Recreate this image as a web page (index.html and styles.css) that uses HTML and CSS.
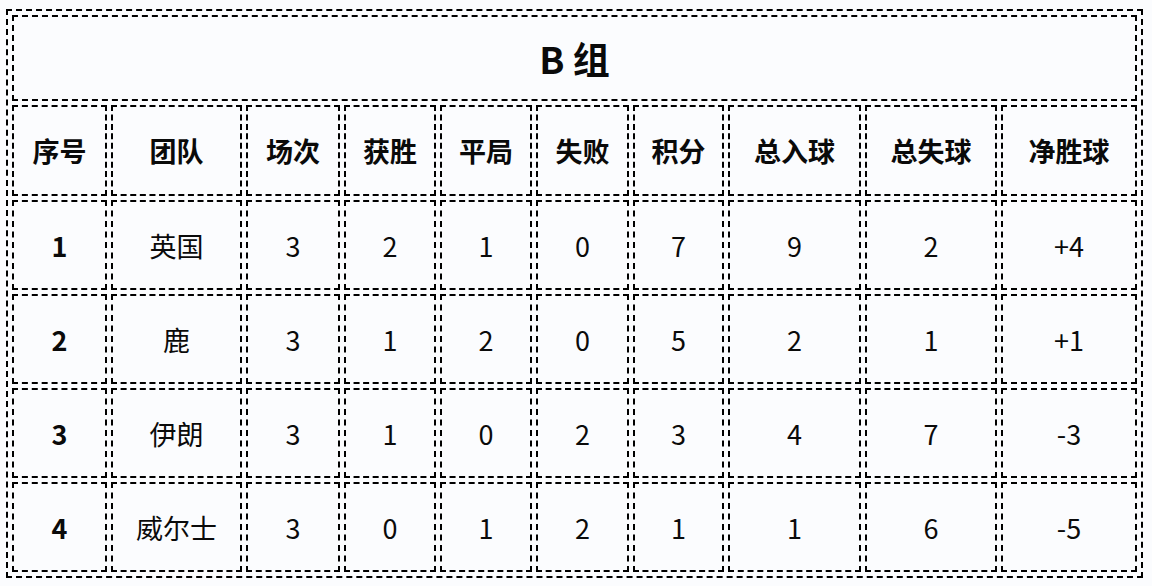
FILE: index.html
```html
<!DOCTYPE html>
<html lang="zh">
<head>
<meta charset="utf-8">
<link rel="stylesheet" href="styles.css">
</head>
<body>
<table class="group">
  <colgroup>
    <col class="c1"><col class="c2"><col class="c3"><col class="c4"><col class="c5">
    <col class="c6"><col class="c7"><col class="c8"><col class="c9"><col class="c10">
  </colgroup>
  <tr class="title-row"><td colspan="10" class="title">B 组</td></tr>
  <tr class="head">
    <th>序号</th><th>团队</th><th>场次</th><th>获胜</th><th>平局</th><th>失败</th><th>积分</th><th>总入球</th><th>总失球</th><th>净胜球</th>
  </tr>
  <tr class="row">
    <td class="rank">1</td><td>英国</td><td>3</td><td>2</td><td>1</td><td>0</td><td>7</td><td>9</td><td>2</td><td>+4</td>
  </tr>
  <tr class="row">
    <td class="rank">2</td><td>鹿</td><td>3</td><td>1</td><td>2</td><td>0</td><td>5</td><td>2</td><td>1</td><td>+1</td>
  </tr>
  <tr class="row">
    <td class="rank">3</td><td>伊朗</td><td>3</td><td>1</td><td>0</td><td>2</td><td>3</td><td>4</td><td>7</td><td>-3</td>
  </tr>
  <tr class="row">
    <td class="rank">4</td><td>威尔士</td><td>3</td><td>0</td><td>1</td><td>2</td><td>1</td><td>1</td><td>6</td><td>-5</td>
  </tr>
</table>
</body>
</html>
```

FILE: styles.css
```css
html, body {
  margin: 0;
  padding: 0;
  background: #fbfcfe;
}
body {
  padding: 9px 0 0 6px;
  font-family: "Noto Sans CJK SC", "Noto Sans", sans-serif;
  color: #0a0a0a;
}
.group {
  border: 2px dashed #000;
  border-collapse: separate;
  border-spacing: 4px;
  table-layout: fixed;
  width: 1137px;
}
.c1 { width: 95px; }
.c2 { width: 131px; }
.c3 { width: 94px; }
.c4 { width: 92px; }
.c5 { width: 92px; }
.c6 { width: 93px; }
.c7 { width: 91px; }
.c8 { width: 133px; }
.c9 { width: 132px; }
.c10 { width: 136px; }
.group td, .group th {
  border: 2px dashed #000;
  padding: 0;
  text-align: center;
  vertical-align: middle;
  box-sizing: border-box;
  font-size: 27px;
  line-height: 1;
}
.group th {
  font-weight: 700;
}
.group td {
  font-weight: 400;
}
.title-row { height: 86px; }
.group td.title {
  font-size: 37px;
  font-weight: 700;
}
.head { height: 91px; }
.row { height: 90px; }
.group td.rank {
  font-weight: 700;
}
```
